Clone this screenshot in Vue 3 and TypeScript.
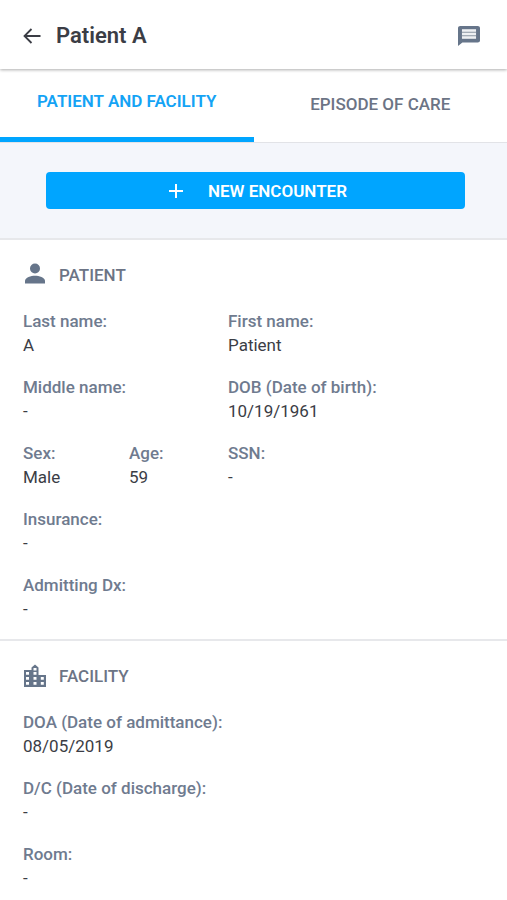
<script setup lang="ts">
import { ref } from 'vue'

interface Field {
  label: string
  value: string
  size: 'left' | 'right' | 'quarter' | 'full'
}

type TabId = 'patient' | 'episode'

const tabs: { id: TabId; label: string }[] = [
  { id: 'patient', label: 'PATIENT AND FACILITY' },
  { id: 'episode', label: 'EPISODE OF CARE' },
]
const activeTab = ref<TabId>('patient')

const patientFields: Field[] = [
  { label: 'Last name:', value: 'A', size: 'left' },
  { label: 'First name:', value: 'Patient', size: 'right' },
  { label: 'Middle name:', value: '-', size: 'left' },
  { label: 'DOB (Date of birth):', value: '10/19/1961', size: 'right' },
  { label: 'Sex:', value: 'Male', size: 'quarter' },
  { label: 'Age:', value: '59', size: 'quarter' },
  { label: 'SSN:', value: '-', size: 'right' },
  { label: 'Insurance:', value: '-', size: 'full' },
  { label: 'Admitting Dx:', value: '-', size: 'full' },
]

const facilityFields: Field[] = [
  { label: 'DOA (Date of admittance):', value: '08/05/2019', size: 'full' },
  { label: 'D/C (Date of discharge):', value: '-', size: 'full' },
  { label: 'Room:', value: '-', size: 'full' },
]
</script>

<template>
  <div class="page">
    <header class="app-bar">
      <button class="icon-button" type="button" aria-label="Back">
        <svg class="icon-back" viewBox="0 0 18 16" aria-hidden="true">
          <path d="M17.5 8H1.5M8.5 1 1.5 8l7 7" fill="none" stroke="currentColor" stroke-width="1.8" />
        </svg>
      </button>
      <h1 class="title">Patient A</h1>
      <button class="icon-button chat" type="button" aria-label="Messages">
        <svg class="icon-chat" viewBox="2 2 20 20" preserveAspectRatio="none" aria-hidden="true">
          <path
            fill="currentColor"
            d="M20 2H4c-1.1 0-1.99.9-1.99 2L2 22l4-3.500h14c1.1 0 2-.9 2-2V4c0-1.1-.9-2-2-2z"
          />
          <path fill="#eef0f3" d="M5.6 5.2h12.8v9.6H5.6z" />
          <path fill="#8b95a3" d="M5.6 7.7h12.8v1.1H5.6zM5.6 11.2h12.8v1.1H5.6z" />
        </svg>
      </button>
    </header>

    <nav class="tabs" role="tablist">
      <button
        v-for="tab in tabs"
        :key="tab.id"
        class="tab"
        :class="{ active: tab.id === activeTab }"
        type="button"
        role="tab"
        :aria-selected="tab.id === activeTab"
        @click="activeTab = tab.id"
      >
        {{ tab.label }}
      </button>
    </nav>

    <div class="action">
      <button class="primary" type="button">
        <svg class="icon-plus" viewBox="0 0 16 16" aria-hidden="true">
          <path d="M8 1v14M1 8h14" fill="none" stroke="currentColor" stroke-width="2" />
        </svg>
        <span>NEW ENCOUNTER</span>
      </button>
    </div>

    <section class="section">
      <h2 class="heading">
        <svg class="icon-section" viewBox="0 0 24 24" aria-hidden="true">
          <circle cx="12" cy="5.500" r="5" fill="currentColor" />
          <path fill="currentColor" d="M2 20.500V18c0-3.300 6-5.200 10-5.200s10 1.900 10 5.200v2.500z" />
        </svg>
        PATIENT
      </h2>
      <dl class="fields">
        <div v-for="field in patientFields" :key="field.label" class="field" :class="field.size">
          <dt>{{ field.label }}</dt>
          <dd>{{ field.value }}</dd>
        </div>
      </dl>
    </section>

    <section class="section">
      <h2 class="heading">
        <svg class="icon-section" viewBox="0 0 24 24" aria-hidden="true">
          <path
            fill="currentColor"
            fill-rule="evenodd"
            d="M1 23V6h7.500V3.500L12 .5l3.500 3V11H23v12zM3 8v2.700h3V8zM3 13v2.700h3V13zM3 18v2.700h3V18zM10.500 4v2.500h3V4zM10.500 8v2.700h3V8zM10.500 13v2.700h3V13zM10.500 18v2.700h3V18zM17.800 13v2.700h3V13zM17.800 18v2.700h3V18z"
          />
        </svg>
        FACILITY
      </h2>
      <dl class="fields">
        <div v-for="field in facilityFields" :key="field.label" class="field" :class="field.size">
          <dt>{{ field.label }}</dt>
          <dd>{{ field.value }}</dd>
        </div>
      </dl>
    </section>
  </div>
</template>

<style>
body {
  margin: 0;
  background: #fff;
}
</style>

<style scoped>
.page {
  font-family: Roboto, 'Liberation Sans', sans-serif;
  font-size: 17px;
  line-height: 24px;
  color: #3b3d45;
}

button {
  font: inherit;
  border: 0;
  padding: 0;
  background: none;
  cursor: pointer;
}

svg {
  display: block;
  flex: none;
}

.app-bar {
  position: relative;
  display: flex;
  align-items: center;
  box-sizing: border-box;
  height: 69px;
  padding: 2px 27px 0 23px;
  background: #fff;
  box-shadow: 0 1px 3px rgba(0, 0, 0, 0.32);
}

.icon-button {
  color: #3b3d45;
}

.icon-back {
  width: 18px;
  height: 16px;
}

.title {
  margin: 0 0 0 15px;
  font-size: 22px;
  line-height: 28px;
  font-weight: 600;
}

.chat {
  margin-left: auto;
  color: #66758a;
}

.icon-chat {
  width: 22px;
  height: 20px;
}

.tabs {
  display: grid;
  grid-template-columns: 1fr 1fr;
  height: 73px;
  border-bottom: 1px solid #e2e3e7;
}

.tab {
  padding-bottom: 4px;
  font-weight: 500;
  color: #6c7485;
}

.tab.active {
  border-bottom: 5px solid #00a5ff;
  font-weight: 600;
  color: #14a3f5;
}

.action {
  padding: 29px 42px 29px 46px;
  background: #f4f6fb;
}

.primary {
  display: flex;
  align-items: center;
  justify-content: center;
  gap: 24px;
  width: 100%;
  height: 37px;
  padding-left: 4px;
  border-radius: 4px;
  background: #00a5ff;
  color: #fff;
  font-weight: 600;
}

.icon-plus {
  width: 16px;
  height: 16px;
}

.section {
  padding: 23px 23px 18px;
  border-top: 2px solid #e7e8eb;
}

.heading {
  display: flex;
  align-items: center;
  gap: 12px;
  margin: 0 0 22px;
  font-size: 17px;
  font-weight: 500;
  color: #6c7485;
}

.icon-section {
  width: 24px;
  height: 24px;
  color: #66758a;
}

.fields {
  display: grid;
  grid-template-columns: 106fr 99fr 256fr;
  row-gap: 18px;
  margin: 0;
}

.left {
  grid-column: span 2;
}

.right {
  grid-column: 3;
}

.full {
  grid-column: 1 / -1;
}

dt {
  font-weight: 500;
  color: #6f7b8f;
}

dd {
  margin: 0;
}
</style>
